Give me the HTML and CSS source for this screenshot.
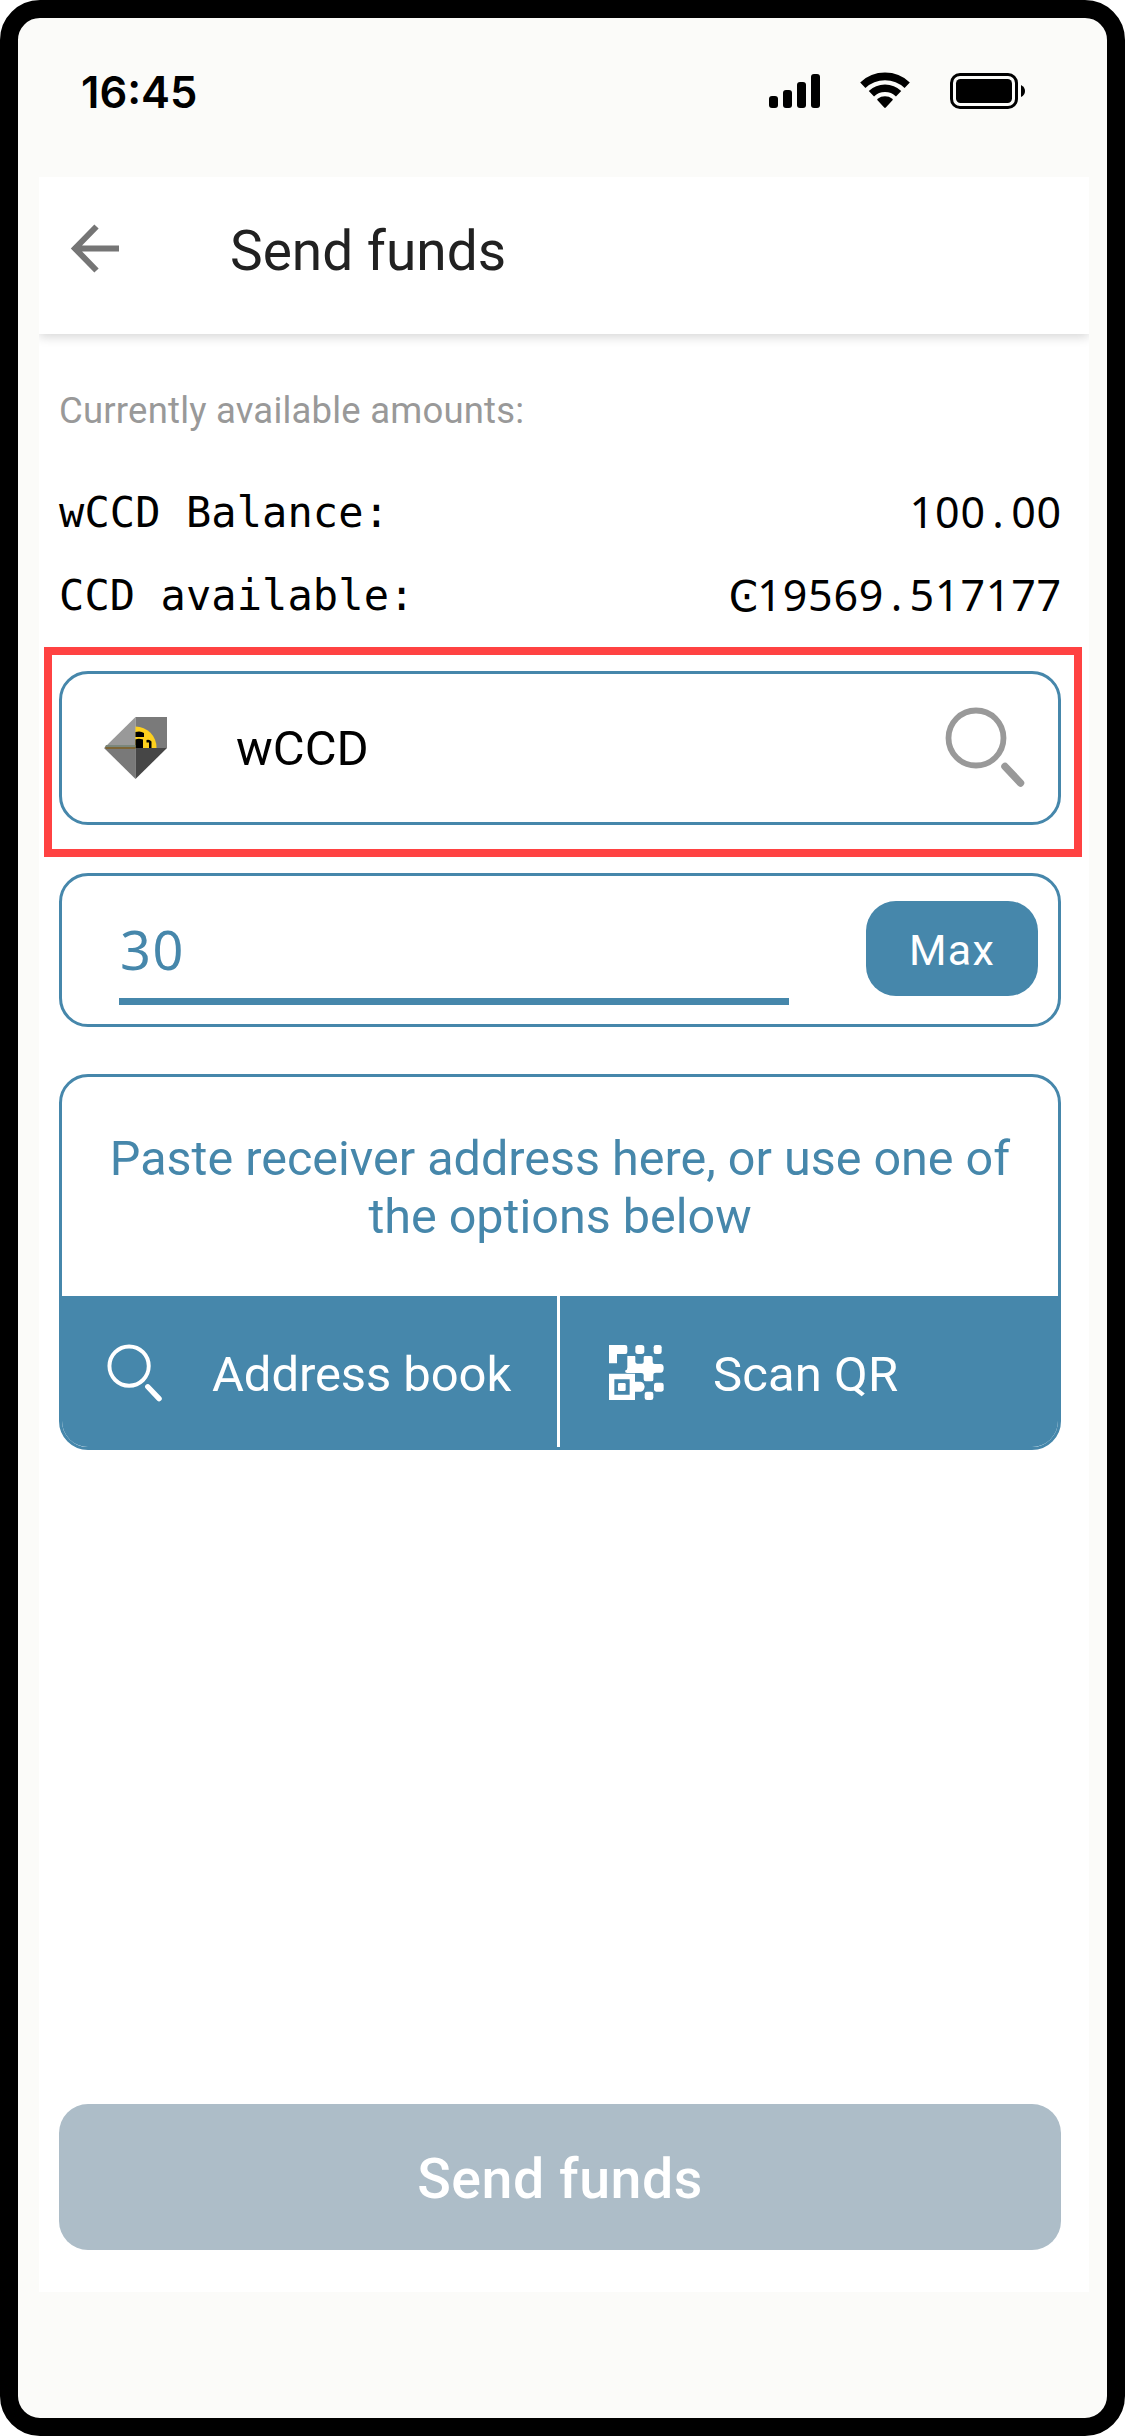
FILE: index.html
```html
<!DOCTYPE html>
<html lang="en">
<head>
<meta charset="utf-8">
<title>Send funds</title>
<link rel="stylesheet" href="styles.css">
</head>
<body>
<div class="phone">
  <div class="status">
    <span class="clock">16:45</span>
    <div class="status-icons">
      <svg class="signal" viewBox="0 0 51 34"><rect y="22" width="9" height="12" rx="3"/><rect x="14" y="16" width="9" height="18" rx="3"/><rect x="28" y="8" width="9" height="26" rx="3"/><rect x="42" width="9" height="34" rx="3"/></svg>
      <svg class="wifi" viewBox="0 0 50 36"><g fill="none" stroke="#000" stroke-width="7.6"><path d="M2.8 13.2a32.3 32.3 0 0 1 44.4 0"/><path d="M11.4 21.8a19.6 19.6 0 0 1 27.2 0"/></g><path d="M17.5 28.3q-.8-.9.2-1.6a12 12 0 0 1 14.6 0q1 .7.2 1.6l-6.7 7.2q-.8.8-1.6 0z"/></svg>
      <svg class="battery" viewBox="0 0 76 36"><rect x="1.5" y="1.5" width="65" height="33" rx="8.5" fill="none" stroke="#000" stroke-width="3"/><rect x="6" y="6" width="56" height="24" rx="4.5"/><path d="M71 12q4 2 4 6t-4 6z"/></svg>
    </div>
  </div>
  <main class="screen">
    <header class="header">
      <svg class="back" viewBox="0 0 48 50" fill="none" stroke="#757575" stroke-width="6"><path d="M48 24.5H5M25.5 2.5L4 24.5l21.500 22"/></svg>
      <h1 class="title">Send funds</h1>
    </header>
    <div class="content">
      <p class="caption">Currently available amounts:</p>
      <div class="row"><span class="key">wCCD Balance:</span><span class="value">100<i class="cell">.</i>00</span></div>
      <div class="row"><span class="key">CCD available:</span><span class="value"><i class="cell sign">Ͼ</i>19569<i class="cell">.</i>517177</span></div>
      <div class="card token">
        <svg class="token-icon" viewBox="0 0 63 64">
          <path fill="#999" d="M31.500 1v31H0z"/><path fill="#7a7a7a" d="M31.500 1H63v31H31.500z"/><path fill="#797979" d="M0 32h31.500v31z"/><path fill="#464646" d="M31.500 32H63L31.500 63z"/>
          <path fill="#fdd01e" d="M31.500 10.500A21 21 0 0 1 52.500 32h-21z"/><path d="M31.500 16q5-1.500 8.500 1v4h-8.500zM31.500 23.500q3-1.500 7.500 0V32h-7.500zM42.500 24q3-1 5 1.500V32h-2.500v-5.500h-2.500z"/>
          <path fill="#7d6535" d="M1 31h30.500v2H2z"/><path fill="#7b877c" d="M2 29h29.500v2H1z"/>
        </svg>
        <span class="token-name">wCCD</span>
        <svg class="search" viewBox="0 0 80 82" fill="none" stroke="#999"><circle cx="31" cy="31" r="27.500" stroke-width="5.800"/><path d="M60 59.500l15.500 16.500" stroke-width="7.500" stroke-linecap="round"/></svg>
      </div>
      <div class="card amount">
        <div class="field">30</div>
        <div class="max">Max</div>
      </div>
      <div class="card receiver">
        <p class="hint">Paste receiver address here, or use one of<br>the options below</p>
        <div class="options">
          <div class="option">
            <svg class="option-icon" viewBox="0 0 57 58" fill="none" stroke="#fff"><circle cx="23" cy="22.500" r="20" stroke-width="4"/><path d="M42 43.500l11.500 12" stroke-width="5.500" stroke-linecap="round"/></svg>
            <span class="address">Address book</span>
          </div>
          <div class="option scan">
            <svg class="option-icon" viewBox="30 29 171 169" fill="#fff">
              <path d="M33 31h48q7 0 7 7v14q0 6-6 6H57v28H33z"/><rect x="112" y="31" width="27" height="27" rx="8"/><rect x="167" y="31" width="24" height="27" rx="7"/>
              <path d="M88 64h22q2 0 2 3v15q1 5 6 5h13q6 0 6-5V68q0-4 5-4h16q6 0 6 5v14q0 5 6 5h18q9 0 9 12 0 14-9 14h-14q-8 0-8 7v14q0 5-6 5h-17q-6 0-6-6v-13q0-6-7-6H88q-7 0-7-7 7-1 7-8z"/>
              <path fill-rule="evenodd" d="M33 117h78v24h17q10 2 12 15-2 13-12 15h-17v25H33zM49 134v46h46v-46z"/><rect x="60" y="145" width="23" height="24" rx="4"/>
              <rect x="168" y="144" width="29" height="27" rx="7"/><rect x="140" y="171" width="26" height="25" rx="7"/>
            </svg>
            <span class="scan-text">Scan QR</span>
          </div>
        </div>
      </div>
      <div class="submit">Send funds</div>
    </div>
  </main>
</div>
</body>
</html>
```
FILE: styles.css
```css
* { box-sizing: border-box; }
body { margin: 0; background: #fff; font-family: Roboto, sans-serif; }
h1, p { margin: 0; font-weight: 400; }
svg { display: block; flex: none; overflow: visible; }
.phone { width: 1125px; height: 2436px; border: 18px solid #000; border-radius: 40px; background: #fbfbf9; }
.status { height: 159px; padding: 54px 81px 0 63px; display: flex; justify-content: space-between; }
.clock { font: 600 43.500px/40px Inter, sans-serif; }
.status-icons { display: flex; }
.signal { width: 51px; height: 34px; margin-top: 2px; }
.wifi { width: 50px; height: 36px; margin-left: 40px; }
.battery { width: 76px; height: 36px; margin-left: 40px; margin-top: 1px; }
.screen { height: 2115px; margin: 0 18px 0 21px; background: #fff; display: flex; flex-direction: column; }
.header { height: 157px; flex: none; padding: 0 0 9px 32px; display: flex; align-items: center; box-shadow: 0 3px 10px 0 rgba(0,0,0,.16); clip-path: inset(0 0 -20px 0); }
.back { width: 48px; height: 50px; margin-top: -4px; }
.title { margin-left: 111px; font-size: 55px; color: #212121; white-space: nowrap; }
.content { flex: 1; padding: 54px 28px 42px 20px; display: flex; flex-direction: column; }
.caption { margin-bottom: 39px; font-size: 36.5px; line-height: 45px; height: 44px; letter-spacing: .2px; color: #999; white-space: nowrap; }
.row { height: 83px; display: flex; justify-content: space-between; align-items: center; line-height: 83px; white-space: pre; }
.key { font-family: "DejaVu Sans Mono", monospace; font-size: 42px; letter-spacing: .1px; }
.value { font-family: "Noto Sans", sans-serif; font-size: 43px; letter-spacing: .8px; height: 83px; margin: -3px -1px 0 0; }
.cell { display: inline-block; width: 25.4px; text-align: center; font-style: normal; }
.sign { font-family: "DejaVu Sans", sans-serif; font-size: 42px; letter-spacing: 0; line-height: 1; text-indent: -3px; }
.card { position: relative; flex: none; height: 154px; border: 3px solid #4687ab; border-radius: 29px; display: flex; }
.token { margin-top: 34px; align-items: center; padding: 0 33px 0 42px; }
.token::after { content: ""; position: absolute; inset: -27px -24px -35px -18px; border: 8px solid #ff4242; }
.token-icon { width: 63px; height: 64px; }
.token-name { margin-left: 69px; font-size: 49px; }
.search { width: 80px; height: 82px; margin-left: auto; }
.amount { margin-top: 48px; justify-content: space-between; padding: 0 20px 0 57px; }
.field { width: 670px; height: 129px; border-bottom: 7px solid #4687ab; color: #4687ab; font: 54px/147px "Noto Sans", sans-serif; letter-spacing: 1.500px; text-indent: 1px; }
.max { width: 172px; height: 95px; margin-top: 25px; border-radius: 30px; background: #4687ab; color: #fff; font-size: 43px; line-height: 99px; letter-spacing: 1.200px; text-align: center; }
.receiver { margin-top: 47px; height: 376px; flex-direction: column; overflow: hidden; }
.hint { height: 219px; padding-top: 53px; font-size: 48.500px; line-height: 58px; text-align: center; color: #4687ab; white-space: nowrap; }
.options { flex: 1; display: flex; gap: 3px; margin: 0 -1px -3px; }
.option { flex: 1; background: #4687ab; color: #fff; font-size: 49px; display: flex; align-items: center; padding: 0 0 2px 45px; white-space: nowrap; }
.option-icon { width: 57px; height: 57px; }
.scan { padding-left: 48px; }
.address { margin: 5px 0 0 49px; letter-spacing: -.1px; }
.scan-text { margin: 5px 0 0 48px; letter-spacing: .1px; }
.submit { margin-top: auto; height: 146px; border-radius: 29px; background: #adbdc8; color: #fff; font-size: 55.500px; font-weight: 500; line-height: 151px; letter-spacing: .5px; text-align: center; }
```
